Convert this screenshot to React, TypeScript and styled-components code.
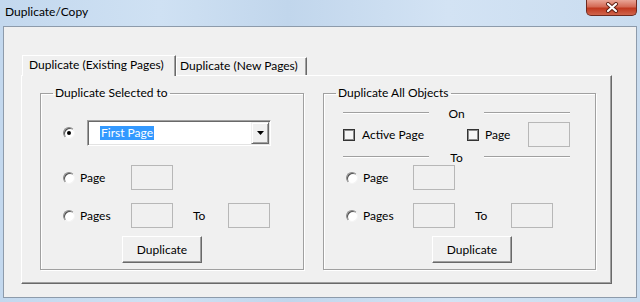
import { createGlobalStyle, styled } from "styled-components";

const GlobalStyle = createGlobalStyle`
  body {
    margin: 0;
    font-family: "Segoe UI", Lato, "Liberation Sans", sans-serif;
    font-size: 12px;
    color: #000;
  }
`;

const Window = styled.div`
  width: 640px;
  height: 302px;
  overflow: hidden;
  display: flex;
  flex-direction: column;
  background: linear-gradient(90deg, #c3d8ee 0%, #cfe1f3 25%, #c1d6ec 45%, #d3e3f4 70%, #c9dcef 100%);
`;

const TitleBar = styled.div`
  height: 26px;
  display: flex;
  justify-content: space-between;
  align-items: flex-start;
  padding-left: 5px;
  box-sizing: border-box;
`;

const Title = styled.div`
  line-height: 24px;
  font-size: 12px;
`;

const CloseButton = styled.div`
  width: 51px;
  height: 16px;
  margin-right: 3px;
  box-sizing: border-box;
  border: 1px solid #6e2a1f;
  border-top: none;
  border-radius: 0 0 5px 5px;
  background: linear-gradient(180deg, #e9a596 0%, #d46a55 45%, #c0391f 55%, #d0654c 100%);
  display: flex;
  align-items: center;
  justify-content: center;
`;

const Client = styled.div`
  margin-left: 3px;
  width: 634px;
  height: 272px;
  box-sizing: border-box;
  border: 1px solid #8d9bab;
  background: #f0f0f0;
  padding: 28px 0 0 17px;
`;

const TabStrip = styled.div`
  display: flex;
  align-items: flex-end;
  height: 21px;
  margin-left: 1px;
  position: relative;
  z-index: 1;
`;

const Tab = styled.div<{ $active?: boolean; $w: number }>`
  width: ${(p) => p.$w}px;
  height: ${(p) => (p.$active ? 21 : 18)}px;
  margin-bottom: ${(p) => (p.$active ? 0 : 1)}px;
  box-sizing: border-box;
  background: #f0f0f0;
  border-top: 1px solid #fff;
  border-left: 1px solid #fff;
  border-right: 1px solid #696969;
  box-shadow: inset -1px 0 #a0a0a0;
  padding-left: ${(p) => (p.$active ? 6 : 3)}px;
  line-height: ${(p) => (p.$active ? 17 : 16)}px;
  white-space: nowrap;
`;

const Panel = styled.div`
  margin-top: -1px;
  width: 591px;
  height: 209px;
  box-sizing: border-box;
  border-top: 1px solid #fff;
  border-left: 1px solid #fff;
  border-right: 1px solid #696969;
  border-bottom: 1px solid #696969;
  box-shadow: inset -1px -1px #a0a0a0;
  padding: 10px 0 0 18px;
  display: flex;
  gap: 19px;
`;

const GroupBox = styled.fieldset<{ $w: number }>`
  margin: 0;
  padding: 0;
  min-width: 0;
  width: ${(p) => p.$w}px;
  height: 184px;
  box-sizing: border-box;
  border: 1px solid #a0a0a0;
  box-shadow: inset 1px 1px #fff, 1px 1px #fff;
`;

const Legend = styled.legend`
  padding: 0 2px;
  margin-left: 12px;
  line-height: 14px;
`;

const Row = styled.div<{ $top: number; $left: number }>`
  display: flex;
  align-items: center;
  margin-top: ${(p) => p.$top}px;
  padding-left: ${(p) => p.$left}px;
`;

const Option = styled.div<{ $w: number; $gap?: number }>`
  display: flex;
  align-items: center;
  gap: ${(p) => p.$gap ?? 5}px;
  width: ${(p) => p.$w}px;
  white-space: nowrap;
`;

const Radio = styled.span<{ $checked?: boolean }>`
  width: 12px;
  height: 12px;
  box-sizing: border-box;
  border-radius: 50%;
  background: #fff;
  border: 1px solid;
  border-color: #8a8a8a #f4f4f4 #f4f4f4 #8a8a8a;
  box-shadow: inset 1px 1px #505050;
  display: flex;
  align-items: center;
  justify-content: center;
  flex: none;
  &::after {
    content: "";
    width: 4px;
    height: 4px;
    border-radius: 50%;
    background: ${(p) => (p.$checked ? "#000" : "transparent")};
  }
`;

const Checkbox = styled.span`
  width: 12px;
  height: 12px;
  box-sizing: border-box;
  border: 1px solid #333;
  box-shadow: inset 0 0 0 1px #8c8c8c;
  background: #f6f6f6;
  flex: none;
`;

const TextBox = styled.div`
  width: 42px;
  height: 25px;
  box-sizing: border-box;
  border: 1px solid #b7b7b7;
  background: #f0f0f0;
  flex: none;
`;

const Caption = styled.span<{ $ml: number; $w: number }>`
  margin-left: ${(p) => p.$ml}px;
  width: ${(p) => p.$w}px;
`;

const Combo = styled.div`
  width: 184px;
  height: 26px;
  box-sizing: border-box;
  border: 1px solid;
  border-color: #a0a0a0 #fff #fff #a0a0a0;
  box-shadow: inset 1px 1px #696969, inset -1px -1px #e3e3e3;
  background: #fff;
  display: flex;
  align-items: center;
  justify-content: space-between;
  padding: 0 0 0 12px;
`;

const Selected = styled.span`
  background: #3399ff;
  color: #fff;
  line-height: 14px;
  padding: 0 1px;
`;

const DropButton = styled.div`
  width: 18px;
  height: 22px;
  margin-right: 1px;
  box-sizing: border-box;
  background: #f0f0f0;
  border: 1px solid;
  border-color: #f0f0f0 #696969 #696969 #f0f0f0;
  box-shadow: inset 1px 1px #fff, inset -1px -1px #a0a0a0;
  display: flex;
  align-items: center;
  justify-content: center;
`;

const PushButton = styled.div<{ $top: number; $left: number }>`
  margin-top: ${(p) => p.$top}px;
  margin-left: ${(p) => p.$left}px;
  width: 80px;
  height: 27px;
  box-sizing: border-box;
  background: #f0f0f0;
  border: 1px solid;
  border-color: #fff #696969 #696969 #fff;
  box-shadow: inset -1px -1px #a0a0a0;
  display: flex;
  align-items: center;
  justify-content: center;
`;

const LineRow = styled.div<{ $top: number }>`
  display: flex;
  align-items: center;
  height: 14px;
  margin-top: ${(p) => p.$top}px;
  padding-left: 19px;
`;

const Etched = styled.div`
  width: 86px;
  height: 0;
  border-top: 1px solid #a0a0a0;
  border-bottom: 1px solid #fff;
`;

const LineText = styled.span`
  width: 55px;
  text-align: center;
`;

function App() {
  return (
    <Window>
      <GlobalStyle />
      <TitleBar>
        <Title>Duplicate/Copy</Title>
        <CloseButton>
          <svg width="14" height="11" viewBox="0 0 14 11">
            <path d="M3 2 L11 9 M11 2 L3 9" stroke="#5b1d12" strokeWidth="4" strokeLinecap="round" />
            <path d="M3 2 L11 9 M11 2 L3 9" stroke="#fff" strokeWidth="2.2" strokeLinecap="round" />
          </svg>
        </CloseButton>
      </TitleBar>
      <Client>
        <TabStrip>
          <Tab $active $w={154}>Duplicate (Existing Pages)</Tab>
          <Tab $w={131}>Duplicate (New Pages)</Tab>
        </TabStrip>
        <Panel>
          <GroupBox $w={264}>
            <Legend>Duplicate Selected to</Legend>
            <Row $top={20} $left={22}>
              <Option $w={24}>
                <Radio $checked />
              </Option>
              <Combo>
                <Selected>First Page</Selected>
                <DropButton>
                  <svg width="7" height="4" viewBox="0 0 7 4">
                    <path d="M0 0 H7 L3.5 4 Z" fill="#000" />
                  </svg>
                </DropButton>
              </Combo>
            </Row>
            <Row $top={19} $left={22}>
              <Option $w={68}>
                <Radio />
                <span>Page</span>
              </Option>
              <TextBox />
            </Row>
            <Row $top={13} $left={22}>
              <Option $w={68}>
                <Radio />
                <span>Pages</span>
              </Option>
              <TextBox />
              <Caption $ml={20} $w={35}>To</Caption>
              <TextBox />
            </Row>
            <PushButton $top={8} $left={81}>Duplicate</PushButton>
          </GroupBox>
          <GroupBox $w={273}>
            <Legend>Duplicate All Objects</Legend>
            <LineRow $top={6}>
              <Etched />
              <LineText>On</LineText>
              <Etched />
            </LineRow>
            <Row $top={2} $left={19}>
              <Option $w={124} $gap={7}>
                <Checkbox />
                <span>Active Page</span>
              </Option>
              <Option $w={61} $gap={6}>
                <Checkbox />
                <span>Page</span>
              </Option>
              <TextBox />
            </Row>
            <LineRow $top={3}>
              <Etched />
              <LineText>To</LineText>
              <Etched />
            </LineRow>
            <Row $top={1} $left={22}>
              <Option $w={67}>
                <Radio />
                <span>Page</span>
              </Option>
              <TextBox />
            </Row>
            <Row $top={13} $left={22}>
              <Option $w={67}>
                <Radio />
                <span>Pages</span>
              </Option>
              <TextBox />
              <Caption $ml={20} $w={36}>To</Caption>
              <TextBox />
            </Row>
            <PushButton $top={8} $left={108}>Duplicate</PushButton>
          </GroupBox>
        </Panel>
      </Client>
    </Window>
  );
}

export default App;
